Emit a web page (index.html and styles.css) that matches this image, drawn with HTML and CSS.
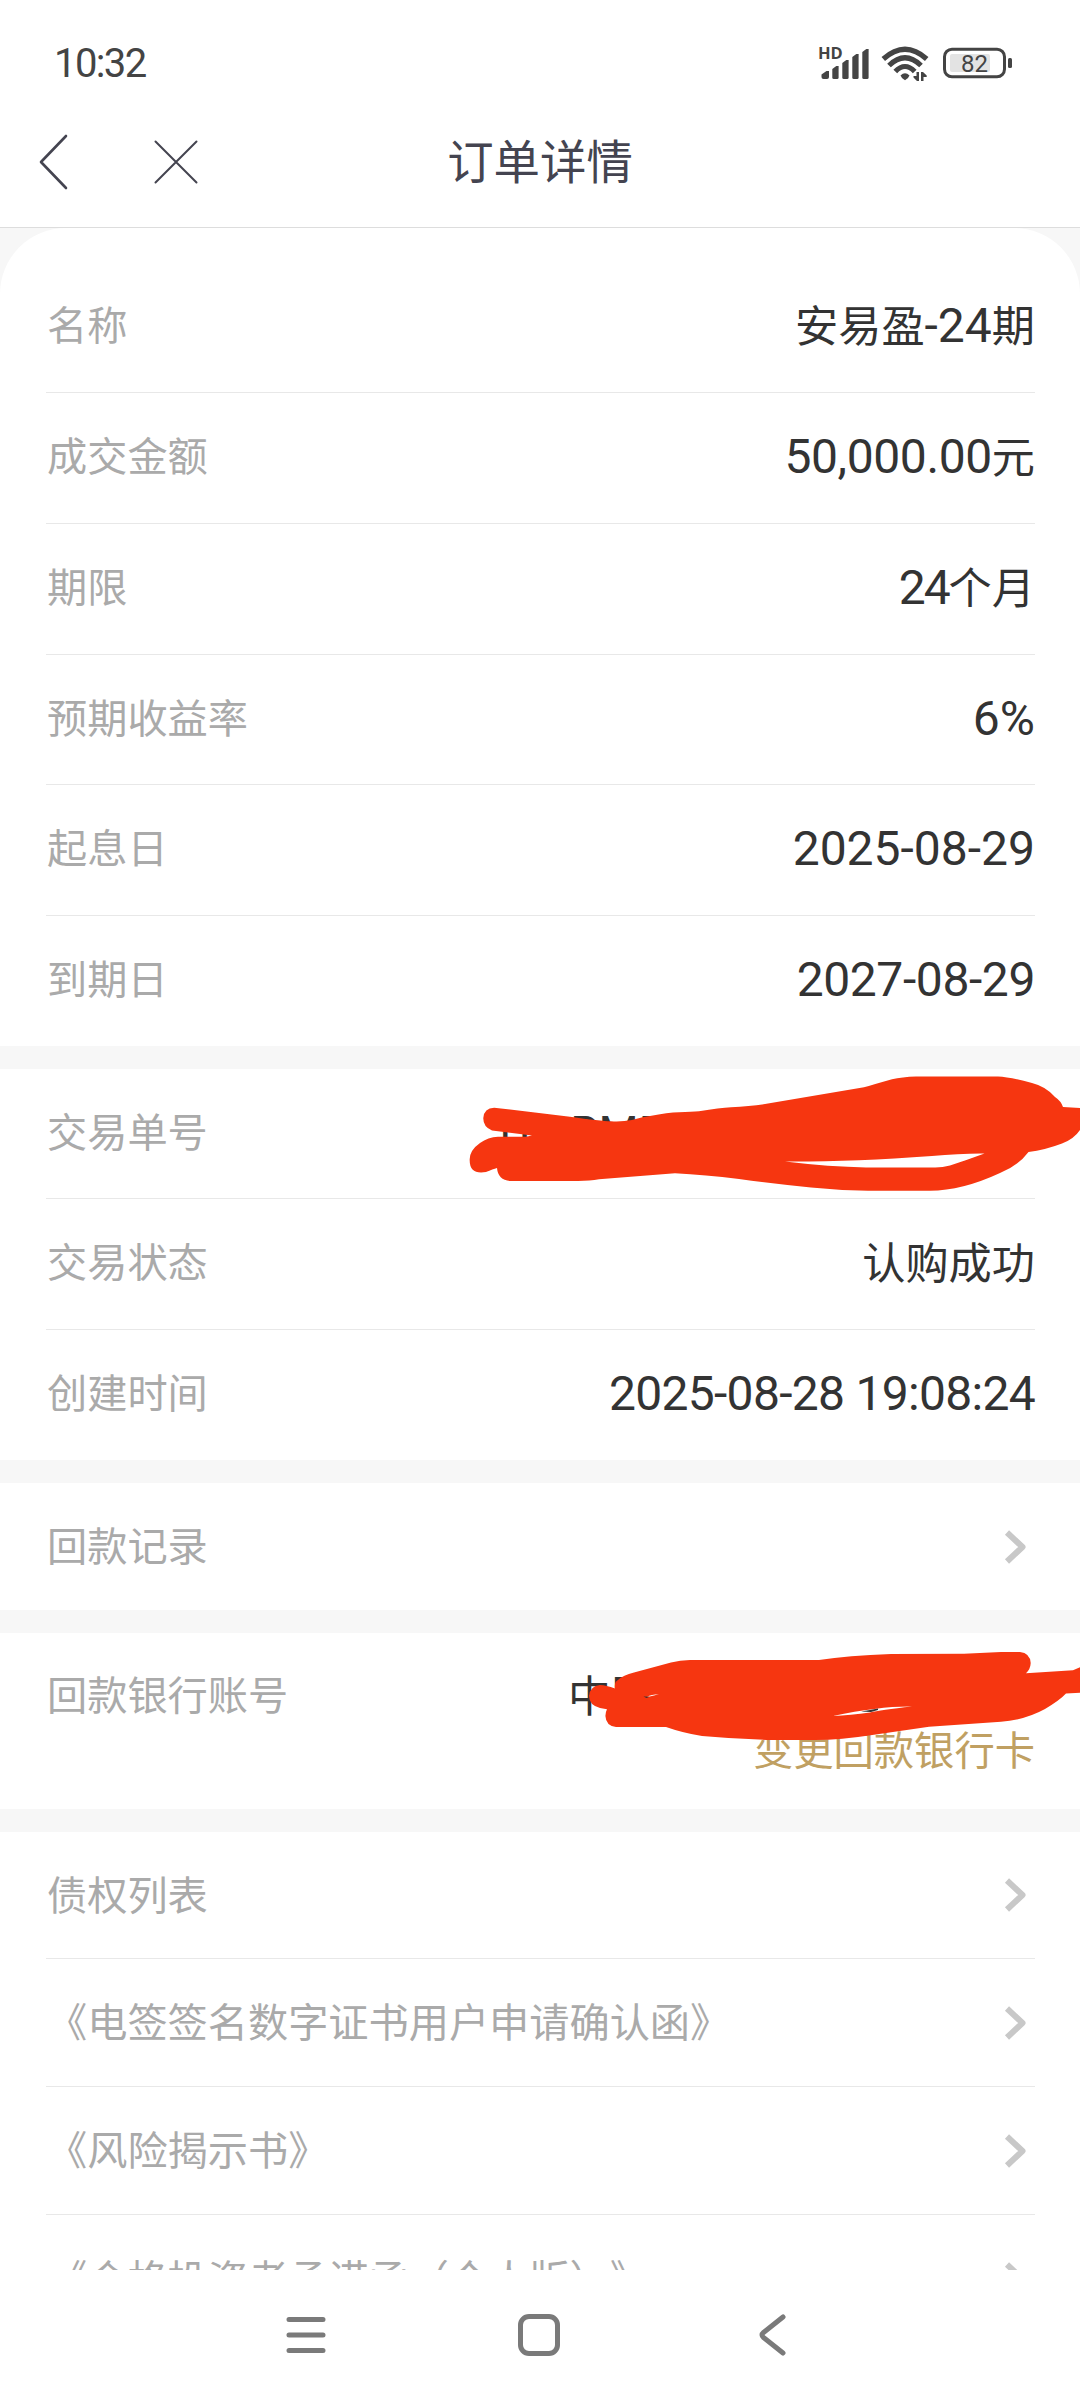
FILE: index.html
```
<!DOCTYPE html>
<html lang="zh-CN">
<head>
  <meta charset="UTF-8">
  <title>订单详情</title>
  <link rel="stylesheet" href="styles.css">
</head>
<body>

<div class="status-bar">
  <span class="clock">10:32</span>
  <svg class="status-icons" width="200" height="44" viewBox="816 42 200 44">
    <text class="hd" x="818" y="59.3">HD</text>
    <g fill="#444">
      <path d="M821.500 77v-2.500l5-3.500h2.500v6q0 2-2 2h-3.500q-2 0-2-2z"/>
      <path d="M832.300 69l4-3h2.300v11.500q0 1.500-1.500 1.500h-3.300q-1.500 0-1.500-1.500z"/>
      <path d="M842.300 63l4-3h2.300v17.500q0 1.500-1.500 1.500h-3.300q-1.500 0-1.500-1.500z"/>
      <path d="M852.300 57l4-3h2.300v23.500q0 1.500-1.500 1.500h-3.300q-1.500 0-1.500-1.500z"/>
      <path d="M862.300 52l4-3h2.300v28.500q0 1.500-1.500 1.500h-3.300q-1.500 0-1.500-1.500z"/>
      <path d="M900.500 75.500q4.500-4.500 9 0q-1 3-4.500 4.700q-3.500-1.700-4.500-4.700z"/>
      <path d="M916.500 72h2.500v9h-2l-3.500-3.500v-1.500h3zM921 81v-9h2l3.700 3.500v1.500h-3.200v4z"/>
    </g>
    <rect x="1008" y="58" width="4" height="10" rx="1.500" fill="#444"/>
    <g fill="none" stroke="#444" stroke-width="5.200">
      <path d="M883.300 59q21.700-19.500 43.400 0"/>
      <path d="M889 65.500q16-15.500 32 0"/>
      <path d="M895.300 71.500q9.700-10 19.400 0"/>
    </g>
    <rect x="944.500" y="49.200" width="60" height="27.600" rx="7.500" fill="#fff" stroke="#444" stroke-width="3"/>
    <rect x="950" y="54" width="40" height="18" rx="2" fill="#e3e3e3"/>
    <text class="level" x="974.500" y="71.800" text-anchor="middle">82</text>
  </svg>
</div>

<header class="title-bar">
  <div class="title-actions">
    <svg width="32" height="56" viewBox="0 0 32 56"><path d="M28 2L3 28l25 26"/></svg>
    <svg class="close" width="46" height="46" viewBox="0 0 46 46"><path d="M2.500 2.500l41 41M43.500 2.500l-41 41"/></svg>
  </div>
  <h1>订单详情</h1>
</header>

<main>
  <section class="first">
    <div class="row"><span class="label">名称</span><span class="value">安易盈<b>-24</b>期</span></div>
    <div class="row"><span class="label">成交金额</span><span class="value tight"><b>50,000.00</b>元</span></div>
    <div class="row"><span class="label">期限</span><span class="value months"><b>24</b>个月</span></div>
    <div class="row short"><span class="label">预期收益率</span><span class="value"><b>6%</b></span></div>
    <div class="row"><span class="label">起息日</span><span class="value"><b>2025-08-29</b></span></div>
    <div class="row"><span class="label">到期日</span><span class="value tight"><b>2027-08-29</b></span></div>
  </section>

  <section>
    <div class="row short">
      <span class="label">交易单号</span>
      <span class="value order-no"><b>U<i>SRMF</i></b></span>
      <!-- hand-drawn mask over the order number -->
      <svg class="mask" width="630" height="130" viewBox="450 1069 630 130">
        <path fill-rule="evenodd" d="M494.200 1107.700L570 1116.700Q600 1121 611 1121.300Q622 1122 632 1120Q642 1117 650 1116Q668 1112.500 679 1112.300Q692 1112 699 1111.300Q720 1108 731 1107.300Q750 1106 765 1104L864 1087.300Q872 1085 892 1079.300Q902 1077 916 1076.500H998Q1010 1077 1032 1083Q1046 1086.500 1055 1097Q1061 1101 1063 1107L1080 1108V1130Q1074 1139 1062 1143.500Q1045 1150 1028.500 1152Q1018 1166 1000 1173Q962 1190.700 930 1190.700H868Q840 1190.500 811 1187.500Q775 1184 739 1179Q705 1175 675 1173.300L599 1179.300Q590 1181 578 1181H510Q498 1180 497 1168Q493 1169 486 1172Q469 1175 469.700 1159Q470 1150 480 1143Q488 1137 498 1136.700H526L532 1135.500L492 1130.500Q483 1127 483.300 1118Q484 1108 494.200 1107.700ZM785 1161.600Q850 1162 932 1156Q960 1153.300 984.500 1153.500Q967 1160 950 1165.500Q942 1167.700 934 1167.500H866Q830 1167 785 1161.600Z"/>
      </svg>
    </div>
    <div class="row"><span class="label">交易状态</span><span class="value status">认购成功</span></div>
    <div class="row"><span class="label">创建时间</span><span class="value time"><b>2025-08-28 19:08:24</b></span></div>
  </section>

  <section>
    <div class="row link"><span class="label">回款记录</span><svg class="arrow" width="24" height="36" viewBox="0 0 24 36"><path d="M3 3.500L18.500 18L3 32.500"/></svg></div>
  </section>

  <section class="bank">
    <div class="bank-line"><span class="label">回款银行账号</span><span class="value account">中国</span></div>
    <a class="change">变更回款银行卡</a>
    <!-- hand-drawn mask over the account number -->
    <svg class="mask" width="500" height="110" viewBox="580 1640 500 110">
      <path d="M600 1685Q606 1685 615 1688.500Q614 1682 618 1680Q623 1675 634 1672.500L671 1662.500Q680 1660 690 1660H819Q848 1655.500 891 1654L964 1653.700L1001 1652H1020Q1030 1653 1030.700 1663Q1030.500 1669 1026 1673.300L1073 1670.300L1080 1667.300V1692.700L1066 1693.500Q1060 1700 1045 1709Q1025 1720 1001 1721.700L929 1726.700L874 1734.700Q840 1740 815 1740H771Q735 1739 702 1736Q683 1733 666 1727H616Q606 1726 605.400 1716Q605.500 1712 607 1709.300L600 1708Q589 1705 589 1696Q590 1686 600 1685Z"/>
      <path class="gap" d="M833 1716Q880 1706 912 1706.500Q880 1710 870 1712.500Q850 1715 833 1716ZM647 1697Q651 1694.500 659 1694.300Q655 1695.500 647 1697Z"/>
      <path class="ink" d="M861 1711.500l9-1.500 8-1.500v1.500l-7 2zM643.500 1696.500l6 .2-3 1.200z"/>
    </svg>
  </section>

  <section>
    <div class="row link"><span class="label">债权列表</span><svg class="arrow" width="24" height="36" viewBox="0 0 24 36"><path d="M3 3.500L18.500 18L3 32.500"/></svg></div>
    <div class="row link doc"><span class="label">《电签签名数字证书用户申请确认函》</span><svg class="arrow" width="24" height="36" viewBox="0 0 24 36"><path d="M3 3.500L18.500 18L3 32.500"/></svg></div>
    <div class="row link doc"><span class="label">《风险揭示书》</span><svg class="arrow" width="24" height="36" viewBox="0 0 24 36"><path d="M3 3.500L18.500 18L3 32.500"/></svg></div>
    <div class="row link doc"><span class="label">《合格投资者承诺函（个人版）》</span><svg class="arrow" width="24" height="36" viewBox="0 0 24 36"><path d="M3 3.500L18.500 18L3 32.500"/></svg></div>
  </section>
</main>

<nav class="system-nav">
  <svg width="40" height="44" viewBox="0 0 40 44"><path d="M3 6.500h34M3 22h34M3 37.500h34"/></svg>
  <svg width="44" height="44" viewBox="0 0 44 44"><rect x="3.500" y="3.500" width="37" height="37" rx="8.500"/></svg>
  <svg width="30" height="44" viewBox="0 0 30 44"><path d="M26 4L6.500 19.500Q3.500 22 6.500 24.500L26 40"/></svg>
</nav>

</body>
</html>
```
FILE: styles.css
```
* {
  box-sizing: border-box;
}
body {
  margin: 0;
  width: 1080px;
  height: 2400px;
  overflow: hidden;
  background: #fff;
  font-family: "Noto Sans CJK SC", sans-serif;
  text-spacing-trim: space-all;
}
.status-bar {
  display: flex;
  justify-content: space-between;
  height: 96px;
  padding: 42px 64px 0 54px;
}
.clock {
  font-family: Roboto, sans-serif;
  font-size: 40px;
  line-height: 44px;
  letter-spacing: -1.6px;
  color: #444;
}
.hd {
  font: bold 16.5px "Open Sans", sans-serif;
  fill: #444;
}
.level {
  font: 24px Roboto, sans-serif;
  fill: #444;
}
.title-bar {
  display: grid;
  grid-template-columns: 1fr auto 1fr;
  align-items: center;
  height: 132px;
  padding: 0 38px;
  border-bottom: 1px solid #ddd;
}
.title-actions {
  display: flex;
  align-items: center;
  gap: 83px;
}
.title-actions path {
  fill: none;
  stroke: #444450;
  stroke-width: 2.6;
  stroke-linecap: round;
  stroke-linejoin: round;
}
.title-actions .close path {
  stroke-width: 2;
}
h1 {
  margin: 0;
  padding-bottom: 6px;
  font-size: 46.4px;
  font-weight: normal;
  line-height: 60px;
  color: #444450;
}
main {
  display: flex;
  flex-direction: column;
  gap: 23px;
  height: 2042px;
  overflow: hidden;
  background: #f7f7f7;
}
section {
  flex: none;
  padding: 0 45px 0 46px;
  background: #fff;
}
section.first {
  padding-top: 34px;
  border-radius: 66px 66px 0 0;
}
.row {
  position: relative;
  display: flex;
  justify-content: space-between;
  align-items: center;
  height: 131px;
  padding-bottom: 3px;
  border-bottom: 1px solid #e8e8e8;
}
.row.short,
.row:last-child {
  height: 130px;
}
.row:last-child {
  border-bottom: none;
}
.row.link {
  height: 127px;
  padding-bottom: 0;
}
.row.doc {
  height: 128px;
}
.label {
  padding: 0 0 5px 1px;
  font-size: 40.2px;
  line-height: 56px;
  color: #aaa;
}
.value {
  padding-bottom: 2px;
  font-size: 43.2px;
  line-height: 60px;
  color: #333;
}
.value b {
  font-family: Roboto, sans-serif;
  font-size: 48px;
  font-weight: normal;
}
.tight b {
  letter-spacing: -0.4px;
}
.time b {
  letter-spacing: -0.7px;
}
.months b {
  letter-spacing: -2px;
}
.value.status {
  padding-bottom: 5px;
}
.order-no {
  width: 535px;
}
.order-no b {
  font-size: 46px;
}
.order-no i {
  margin-left: 13px;
  font-style: normal;
}
.arrow {
  margin-right: 7px;
}
.arrow path {
  fill: none;
  stroke: #c8c8c8;
  stroke-width: 6;
  stroke-linejoin: round;
}
.mask {
  position: absolute;
  top: 0;
  right: -45px;
  fill: #f63610;
}
.bank {
  position: relative;
  display: flex;
  flex-direction: column;
  height: 176px;
  padding-top: 32px;
}
.bank-line {
  display: flex;
  justify-content: space-between;
  align-items: center;
  height: 60px;
}
.account {
  width: 467px;
  padding-bottom: 5px;
}
.change {
  align-self: flex-end;
  font-size: 40.3px;
  line-height: 45px;
  color: #c0a062;
}
.bank .mask {
  top: 7px;
  right: 0;
}
.mask .gap {
  fill: #fff;
}
.mask .ink {
  fill: #333;
}
.system-nav {
  display: flex;
  align-items: center;
  gap: 191px;
  height: 130px;
  padding-left: 286px;
  background: #fff;
}
.system-nav svg:last-child {
  margin-left: 5px;
}
.system-nav path,
.system-nav rect {
  fill: none;
  stroke: #7a7a7a;
  stroke-width: 5;
  stroke-linecap: round;
}
```
